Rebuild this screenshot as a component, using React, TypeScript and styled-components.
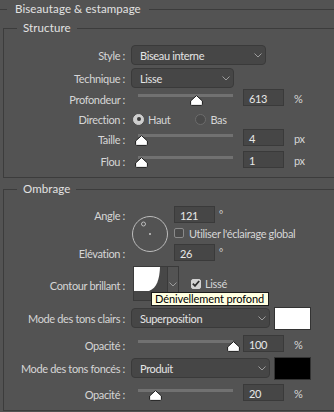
import React from 'react';
import styled, { createGlobalStyle } from 'styled-components';

const GlobalStyle = createGlobalStyle`
  html, body {
    margin: 0;
    background: #535353;
    overflow: hidden;
  }
  body {
    font-family: 'Lato', 'Liberation Sans', sans-serif;
    font-size: 11px;
    letter-spacing: -0.35px;
    color: #d6d6d6;
  }
`;

// Layout
const Panel = styled.div`
  width: 350px;
  padding-top: 1px;
`;

const OuterSet = styled.fieldset`
  margin: 0;
  padding: 3px 0 0 0;
  border: none;
  border-top: 1px solid #3c3c3c;
  min-width: 0;
`;

const OuterLegend = styled.legend`
  margin-left: 7px;
  padding: 0 8px;
  font-size: 11.5px;
  line-height: 16px;
  letter-spacing: 0.1px;
  color: #e2e2e2;
`;

const Group = styled.fieldset<{ $mt?: number; $pb?: number }>`
  margin: ${({ $mt }) => $mt ?? 0}px 0 0 3px;
  padding: 9px 0 ${({ $pb }) => $pb ?? 9}px 0;
  border: 1px solid #3c3c3c;
  min-width: 0;
`;

const GroupLegend = styled.legend`
  margin-left: 13px;
  padding: 0 6px;
  font-size: 11.5px;
  line-height: 16px;
  letter-spacing: 0.1px;
  color: #e2e2e2;
`;

const Row = styled.div<{ $h: number; $mt?: number }>`
  display: flex;
  align-items: center;
  gap: 6px;
  height: ${({ $h }) => $h}px;
  margin-top: ${({ $mt }) => $mt ?? 0}px;
  position: relative;
`;

const Label = styled.div<{ $dy?: number }>`
  width: 121px;
  flex-shrink: 0;
  text-align: right;
  white-space: nowrap;
  padding-top: ${({ $dy }) => $dy ?? 0}px;
`;

// Controls
const Select = styled.div<{ $w: number }>`
  box-sizing: border-box;
  width: ${({ $w }) => $w}px;
  height: 20px;
  display: flex;
  align-items: center;
  justify-content: space-between;
  padding: 0 3px 0 8px;
  background: #464646;
  border: 1px solid #3a3a3a;
  border-radius: 4px;
  color: #e4e4e4;
`;

const NumBox = styled.div<{ $ml?: number }>`
  box-sizing: border-box;
  width: 41px;
  height: 17px;
  margin-left: ${({ $ml }) => $ml ?? 0}px;
  padding: 2px 0 0 5px;
  line-height: 14px;
  background: #464646;
  border: 1px solid #3a3a3a;
  color: #e8e8e8;
`;

const Unit = styled.span<{ $top?: boolean }>`
  margin-left: 4px;
  padding-top: 2px;
  align-self: ${({ $top }) => ($top ? 'flex-start' : 'auto')};
  font-size: ${({ $top }) => ($top ? 10 : 11)}px;
`;

const SliderBox = styled.div`
  position: relative;
  width: 95px;
  height: 16px;
  margin-left: 7px;
  flex-shrink: 0;
`;

const Track = styled.div`
  margin-top: 4px;
  height: 3px;
  background: #717171;
`;

const ThumbWrap = styled.div`
  position: absolute;
  top: 5px;
  width: 13px;
  height: 11px;
  line-height: 0;
`;

const RadioDot = styled.span<{ $on?: boolean }>`
  box-sizing: border-box;
  width: 11px;
  height: 11px;
  border-radius: 50%;
  flex-shrink: 0;
  background: ${({ $on }) => ($on ? '#cfcfcf' : '#4a4a4a')};
  border: 1px solid ${({ $on }) => ($on ? '#cfcfcf' : '#6c6c6c')};
  display: flex;
  align-items: center;
  justify-content: center;
  &::after {
    content: '';
    width: 4px;
    height: 4px;
    border-radius: 50%;
    background: ${({ $on }) => ($on ? '#3a3a3a' : 'transparent')};
  }
`;

const Choice = styled.label<{ $ml?: number }>`
  display: flex;
  align-items: center;
  gap: 4px;
  margin-left: ${({ $ml }) => $ml ?? 0}px;
`;

const Check = styled.span<{ $on?: boolean }>`
  box-sizing: border-box;
  width: 10px;
  height: 10px;
  border-radius: 2px;
  flex-shrink: 0;
  background: ${({ $on }) => ($on ? '#d2d2d2' : '#4a4a4a')};
  border: 1px solid ${({ $on }) => ($on ? '#d2d2d2' : '#8a8a8a')};
  display: flex;
  align-items: center;
  justify-content: center;
  line-height: 0;
`;

const AngleGrid = styled.div`
  display: grid;
  grid-template-columns: 121px 37px auto;
  grid-template-rows: 16px 22px 16px;
  column-gap: 6px;
  align-items: center;
`;

const GridLabel = styled(Label)<{ $row: string }>`
  grid-column: 1;
  grid-row: ${({ $row }) => $row};
`;

const DialCell = styled.div`
  grid-column: 2;
  grid-row: 1 / 4;
  line-height: 0;
`;

const Line = styled.div`
  grid-column: 3;
  display: flex;
  align-items: center;
  height: 100%;
`;

const ContourBox = styled.div`
  display: flex;
  margin-left: 2px;
  height: 35px;
`;

const ContourPreview = styled.div`
  box-sizing: border-box;
  width: 35px;
  height: 35px;
  border: 1px solid #3a3a3a;
  background: #474747;
  line-height: 0;
`;

const ContourArrow = styled.div`
  box-sizing: border-box;
  width: 11px;
  height: 35px;
  border: 1px solid #3a3a3a;
  border-left: none;
  display: flex;
  align-items: center;
  justify-content: center;
  padding-top: 2px;
`;

const Tooltip = styled.div`
  position: absolute;
  left: 147px;
  top: 26px;
  box-sizing: border-box;
  height: 14px;
  padding: 0 4px 0 3px;
  background: #ffffe1;
  border: 1px solid #1a1a1a;
  color: #000;
  font-size: 11px;
  letter-spacing: -0.1px;
  line-height: 12px;
  white-space: nowrap;
`;

const Swatch = styled.div<{ $color: string }>`
  box-sizing: border-box;
  width: 37px;
  height: 23px;
  margin-left: -2px;
  background: ${({ $color }) => $color};
  border: 1px solid #333;
`;

// Drawings
const Chevron = () => (
  <svg width="8" height="5" viewBox="0 0 8 5">
    <polyline points="0.5,0.5 4,4 7.5,0.5" fill="none" stroke="#9c9c9c" strokeWidth="1" />
  </svg>
);

const Thumb = () => (
  <svg width="13" height="11" viewBox="0 0 13 11">
    <path d="M6.5 0.6 L12.4 6 V9.4 Q12.4 10.4 11.4 10.4 H1.6 Q0.6 10.4 0.6 9.4 V6 Z" fill="#ffffff" stroke="#1c1c1c" strokeWidth="1" />
  </svg>
);

const Tick = () => (
  <svg width="8" height="7" viewBox="0 0 8 7">
    <polyline points="0.8,3.6 3,5.8 7.2,1" fill="none" stroke="#2e2e2e" strokeWidth="1.8" />
  </svg>
);

const Dial = () => (
  <svg width="37" height="54" viewBox="0 0 37 54">
    <circle cx="19" cy="28" r="17.5" fill="none" stroke="#bcbcbc" strokeWidth="1" />
    <circle cx="12.5" cy="18" r="2" fill="none" stroke="#bcbcbc" strokeWidth="1" />
    <circle cx="19" cy="28" r="1" fill="#c8c8c8" />
  </svg>
);

const CoveCurve = () => (
  <svg width="33" height="33" viewBox="0 0 33 33">
    <path d="M0 0 H26 C25.5 12 23 21 15 24 L0 24 Z" fill="#ffffff" />
  </svg>
);

interface SliderProps {
  pos: number;
}

const Slider: React.FC<SliderProps> = ({ pos }) => (
  <SliderBox>
    <Track />
    <ThumbWrap style={{ left: 3 + pos * 92 - 6.5 }}>
      <Thumb />
    </ThumbWrap>
  </SliderBox>
);

interface ValueRowProps {
  label: string;
  pos: number;
  value: string;
  unit: string;
  mt?: number;
}

const ValueRow: React.FC<ValueRowProps> = ({ label, pos, value, unit, mt }) => (
  <Row $h={17} $mt={mt}>
    <Label $dy={3}>{label}</Label>
    <Slider pos={pos} />
    <NumBox $ml={4}>{value}</NumBox>
    <Unit>{unit}</Unit>
  </Row>
);

const App: React.FC = () => {
  return (
    <Panel>
      <GlobalStyle />
      <OuterSet>
        <OuterLegend>Biseautage &amp; estampage</OuterLegend>

        <Group $pb={9}>
          <GroupLegend>Structure</GroupLegend>
          <Row $h={20}>
            <Label>Style :</Label>
            <Select $w={135}>
              <span>Biseau interne</span>
              <Chevron />
            </Select>
          </Row>
          <Row $h={20} $mt={3}>
            <Label>Technique :</Label>
            <Select $w={103}>
              <span>Lisse</span>
              <Chevron />
            </Select>
          </Row>
          <ValueRow label="Profondeur :" pos={0.605} value="613" unit="%" mt={1} />
          <Row $h={16} $mt={5}>
            <Label>Direction :</Label>
            <Choice $ml={2}>
              <RadioDot $on />
              <span>Haut</span>
            </Choice>
            <Choice $ml={19}>
              <RadioDot />
              <span>Bas</span>
            </Choice>
          </Row>
          <ValueRow label="Taille :" pos={0} value="4" unit="px" mt={2} />
          <ValueRow label="Flou :" pos={0} value="1" unit="px" mt={5} />
        </Group>

        <Group $mt={3} $pb={9}>
          <GroupLegend>Ombrage</GroupLegend>
          <AngleGrid>
            <GridLabel $row="1" $dy={3}>Angle :</GridLabel>
            <DialCell>
              <Dial />
            </DialCell>
            <Line style={{ gridRow: 1 }}>
              <NumBox>121</NumBox>
              <Unit $top>°</Unit>
            </Line>
            <Line style={{ gridRow: 2 }}>
              <Choice>
                <Check />
                <span style={{ marginLeft: 1 }}>Utiliser l'éclairage global</span>
              </Choice>
            </Line>
            <GridLabel $row="3" $dy={3}>Elévation :</GridLabel>
            <Line style={{ gridRow: 3 }}>
              <NumBox>26</NumBox>
              <Unit $top>°</Unit>
            </Line>
          </AngleGrid>

          <Row $h={35} $mt={6}>
            <Label $dy={3}>Contour brillant :</Label>
            <ContourBox>
              <ContourPreview>
                <CoveCurve />
              </ContourPreview>
              <ContourArrow>
                <Chevron />
              </ContourArrow>
            </ContourBox>
            <Choice $ml={6}>
              <Check $on>
                <Tick />
              </Check>
              <span>Lissé</span>
            </Choice>
            <Tooltip>Dénivellement profond</Tooltip>
          </Row>

          <Row $h={22} $mt={6}>
            <Label>Mode des tons clairs :</Label>
            <Select $w={139}>
              <span>Superposition</span>
              <Chevron />
            </Select>
            <Swatch $color="#ffffff" />
          </Row>
          <ValueRow label="Opacité :" pos={1} value="100" unit="%" mt={6} />
          <Row $h={22} $mt={5}>
            <Label>Mode des tons foncés :</Label>
            <Select $w={139}>
              <span>Produit</span>
              <Chevron />
            </Select>
            <Swatch $color="#000000" />
          </Row>
          <ValueRow label="Opacité :" pos={0.16} value="20" unit="%" mt={5} />
        </Group>
      </OuterSet>
    </Panel>
  );
};

export default App;
